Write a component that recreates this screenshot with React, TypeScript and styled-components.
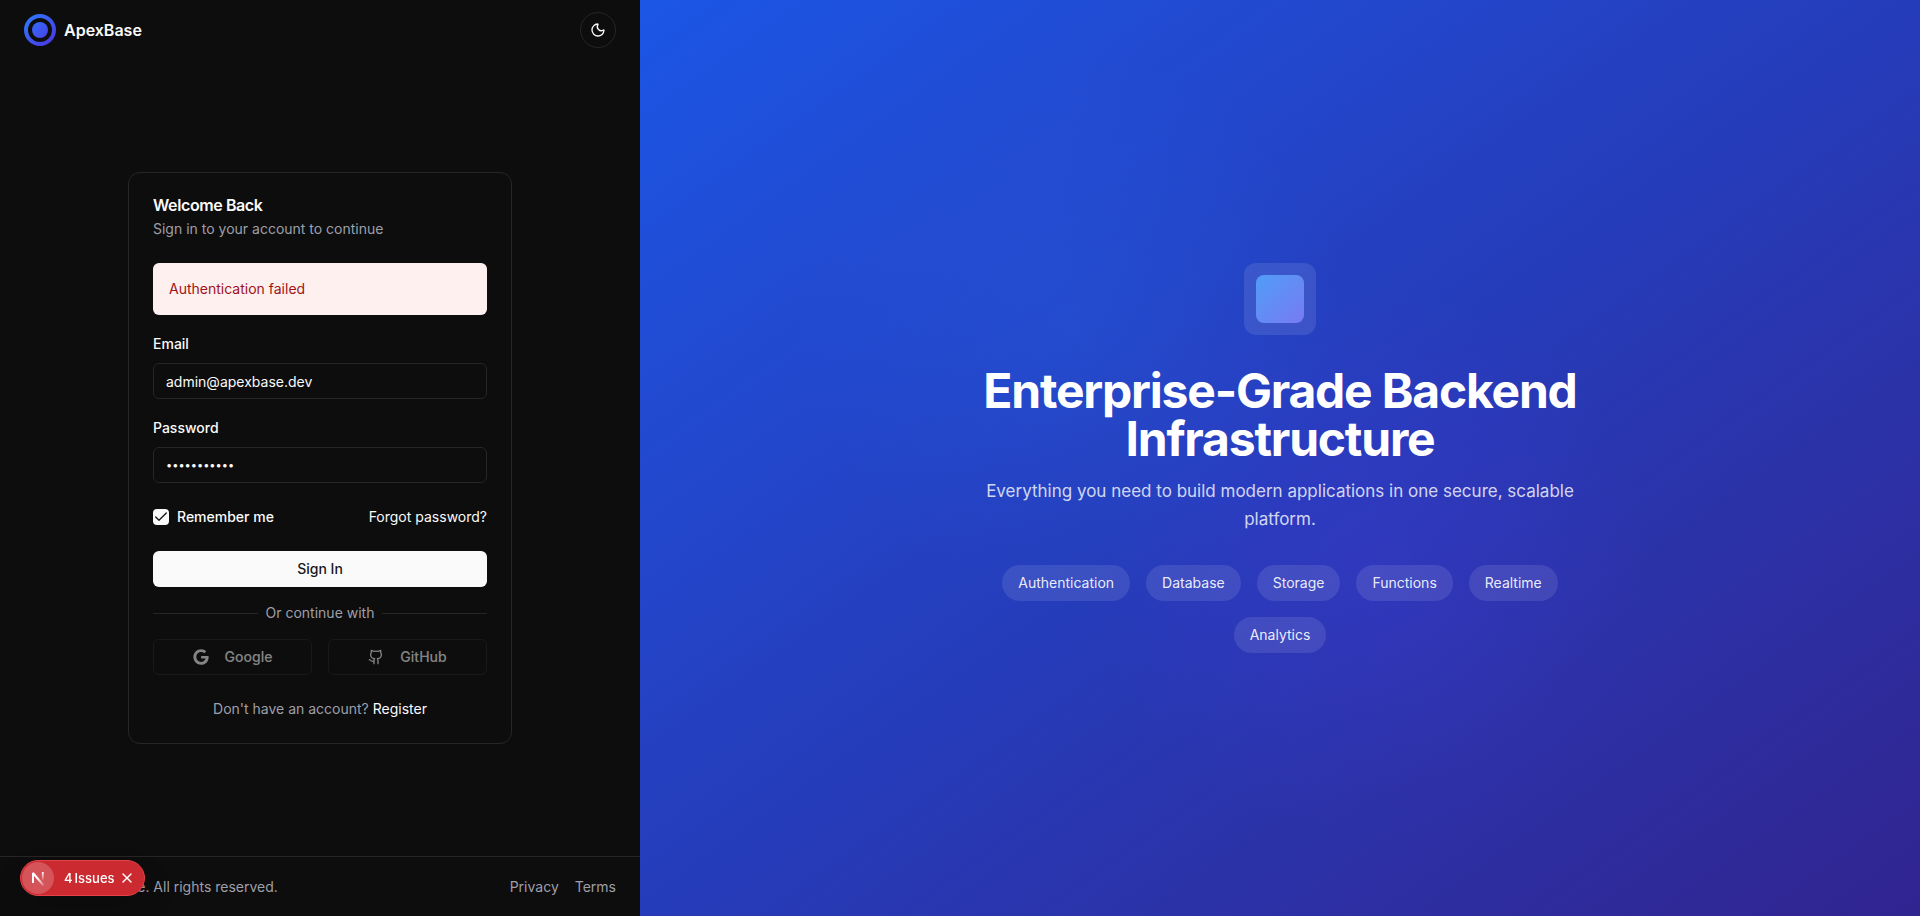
import React from "react";
import styled, { createGlobalStyle } from "styled-components";
import { Check, Github, Moon, X } from "lucide-react";

const Global = createGlobalStyle`
  *, *::before, *::after { box-sizing: border-box; }
  body {
    margin: 0;
    background: #0d0d0d;
    color: #fafafa;
    font-family: Inter, "Liberation Sans", sans-serif;
    font-size: 14px;
    line-height: 20px;
    -webkit-font-smoothing: antialiased;
  }
  a { color: inherit; text-decoration: none; }
  button, input { font: inherit; color: inherit; }
  h1, h2, p { margin: 0; }
`;

const Page = styled.div`
  display: grid;
  grid-template-columns: 1fr 2fr;
  min-height: 100vh;
`;

const Side = styled.div`
  display: flex;
  flex-direction: column;
`;

const Header = styled.header`
  display: flex;
  align-items: center;
  justify-content: space-between;
  height: 60px;
  padding: 0 24px;
`;

const Brand = styled.a`
  display: flex;
  align-items: center;
  gap: 8px;
  font-size: 16px;
  line-height: 24px;
  font-weight: 600;
`;

const ThemeToggle = styled.button`
  display: grid;
  place-items: center;
  width: 36px;
  height: 36px;
  padding: 0;
  border: 1px solid #262626;
  border-radius: 50%;
  background: transparent;
`;

const Main = styled.main`
  flex: 1;
  display: flex;
  align-items: center;
  justify-content: center;
  padding: 24px;
`;

const Card = styled.section`
  width: 100%;
  max-width: 384px;
  padding: 24px;
  border: 1px solid #262626;
  border-radius: 12px;
  display: flex;
  flex-direction: column;
  gap: 24px;
`;

const CardHeader = styled.div`
  display: flex;
  flex-direction: column;
  gap: 6px;
`;

const Title = styled.h1`
  font-size: 16px;
  line-height: 16px;
  font-weight: 600;
  letter-spacing: -0.025em;
`;

const Muted = styled.p`
  color: #9f9fa9;
`;

const Form = styled.form`
  display: flex;
  flex-direction: column;
  gap: 24px;
`;

const Fields = styled.div`
  display: flex;
  flex-direction: column;
  gap: 20px;
`;

const Alert = styled.div`
  padding: 16px;
  border-radius: 6px;
  background: #fef0ef;
  color: #9f1219;
`;

const Field = styled.div`
  display: flex;
  flex-direction: column;
  gap: 10px;
`;

const Label = styled.label`
  line-height: 18px;
  font-weight: 500;
`;

const TextInput = styled.input`
  width: 100%;
  height: 36px;
  padding: 0 12px;
  border: 1px solid #262626;
  border-radius: 6px;
  background: transparent;
  outline: none;
  &[type="password"] { font-size: 11px; }
`;

const Options = styled.div`
  display: flex;
  align-items: center;
  justify-content: space-between;
`;

const Remember = styled.label`
  display: flex;
  align-items: center;
  gap: 8px;
  font-weight: 500;
`;

const CheckBox = styled.span`
  display: grid;
  width: 16px;
  height: 16px;
  input, svg { grid-area: 1 / 1; margin: 0; }
  input {
    appearance: none;
    width: 16px;
    height: 16px;
    border-radius: 4px;
    background: #fafafa;
  }
  svg { place-self: center; color: #171717; pointer-events: none; }
`;

const SubmitButton = styled.button`
  height: 36px;
  border: 0;
  border-radius: 6px;
  background: #fafafa;
  color: #18181b;
  font-weight: 500;
`;

const Social = styled.div`
  display: flex;
  flex-direction: column;
  gap: 16px;
  margin-top: -8px;
`;

const Divider = styled.div`
  display: flex;
  align-items: center;
  gap: 8px;
  color: #9f9fa9;
  &::before, &::after {
    content: "";
    flex: 1;
    height: 1px;
    background: #262626;
  }
`;

const Providers = styled.div`
  display: grid;
  grid-template-columns: 1fr 1fr;
  gap: 16px;
`;

const ProviderButton = styled.button`
  display: flex;
  align-items: center;
  justify-content: center;
  gap: 16px;
  height: 36px;
  border: 1px solid #262626;
  border-radius: 6px;
  background: transparent;
  font-weight: 500;
  opacity: 0.5;
`;

const Register = styled.p`
  color: #9f9fa9;
  text-align: center;
  a { color: #fafafa; }
`;

const Footer = styled.footer`
  display: flex;
  align-items: center;
  justify-content: space-between;
  height: 60px;
  padding: 0 24px;
  border-top: 1px solid #262626;
  color: #9f9fa9;
`;

const FooterLinks = styled.nav`
  display: flex;
  gap: 16px;
`;

const Hero = styled.section`
  display: flex;
  align-items: center;
  justify-content: center;
  padding: 48px;
  background:
    radial-gradient(circle 280px at 34% 36%, rgba(43, 127, 255, 0.12), rgba(43, 127, 255, 0.06) 50%, rgba(43, 127, 255, 0)),
    radial-gradient(circle 280px at 57% 61%, rgba(97, 60, 255, 0.14), rgba(97, 60, 255, 0.08) 50%, rgba(97, 60, 255, 0)),
    linear-gradient(to bottom right in oklab, #1b56e5, #253cba 50%, #302490);
`;

const HeroContent = styled.div`
  display: flex;
  flex-direction: column;
  align-items: center;
  width: 100%;
  max-width: 600px;
  text-align: center;
`;

const Emblem = styled.div`
  display: grid;
  place-items: center;
  width: 72px;
  height: 72px;
  border-radius: 12px;
  background: rgba(255, 255, 255, 0.1);
  &::before {
    content: "";
    width: 48px;
    height: 48px;
    border-radius: 8px;
    background: linear-gradient(to bottom right, #509cf7, #787bf2);
  }
`;

const HeroTitle = styled.h2`
  margin-top: 32px;
  font-size: 48px;
  line-height: 48px;
  font-weight: 700;
  letter-spacing: -0.025em;
  color: #ffffff;
`;

const HeroText = styled.p`
  margin-top: 14px;
  font-size: 17px;
  line-height: 28px;
  color: rgba(255, 255, 255, 0.8);
`;

const Tags = styled.ul`
  display: flex;
  flex-wrap: wrap;
  justify-content: center;
  gap: 16px;
  margin: 32px 0 0;
  padding: 0;
  list-style: none;
`;

const Tag = styled.li`
  padding: 8px 16px;
  border-radius: 18px;
  background: rgba(255, 255, 255, 0.1);
  color: rgba(255, 255, 255, 0.9);
`;

const IssueBadge = styled.div`
  position: fixed;
  left: 20px;
  bottom: 20px;
  display: flex;
  align-items: center;
  height: 36px;
  padding: 0 9px 0 1px;
  border: 1px solid #e5414a;
  border-radius: 18px;
  background: #ca2a30;
  box-shadow: 0 16px 32px rgba(0, 0, 0, 0.14);
  color: #ffffff;
  font-size: 13px;
  line-height: 16px;
  font-weight: 500;
  button {
    display: flex;
    align-items: center;
    padding: 0;
    border: 0;
    background: transparent;
  }
`;

const LogoButton = styled.button`
  && {
    justify-content: center;
    width: 32px;
    height: 32px;
    border-radius: 50%;
    background: rgba(255, 255, 255, 0.2);
  }
`;

const IssueButton = styled.button`
  && {
    gap: 2px;
    margin: 0 4px 0 10px;
  }
`;

function BrandMark() {
  return (
    <svg width="32" height="32" viewBox="0 0 32 32" aria-hidden="true">
      <defs>
        <linearGradient id="mark" x1="0" y1="0" x2="32" y2="32" gradientUnits="userSpaceOnUse">
          <stop stopColor="#2b7fff" />
          <stop offset="1" stopColor="#4f2fe0" />
        </linearGradient>
      </defs>
      <circle cx="16" cy="16" r="14" fill="none" stroke="url(#mark)" strokeWidth="4" />
      <circle cx="16" cy="16" r="8" fill="url(#mark)" />
    </svg>
  );
}

function GoogleIcon() {
  return (
    <svg width="16" height="16" viewBox="0 0 488 512" fill="currentColor" aria-hidden="true">
      <path d="M488 261.8C488 403.3 391.1 504 248 504 110.8 504 0 393.2 0 256S110.8 8 248 8c66.8 0 123 24.5 166.3 64.9l-67.5 64.9C258.5 52.6 94.3 116.6 94.3 256c0 86.5 69.1 156.6 153.7 156.6 98.2 0 135-70.4 140.8-106.9H248v-85.3h236.1c2.3 12.7 3.9 24.9 3.9 41.4z" />
    </svg>
  );
}

function NextMark() {
  return (
    <svg width="16" height="16" viewBox="0 0 16 16" fill="none" aria-hidden="true">
      <defs>
        <linearGradient id="stem" x1="0" y1="2" x2="0" y2="11" gradientUnits="userSpaceOnUse">
          <stop stopColor="#fff" />
          <stop offset="1" stopColor="#fff" stopOpacity="0" />
        </linearGradient>
        <linearGradient id="slash" x1="8" y1="8" x2="14" y2="15" gradientUnits="userSpaceOnUse">
          <stop stopColor="#fff" />
          <stop offset="1" stopColor="#fff" stopOpacity="0.2" />
        </linearGradient>
      </defs>
      <path d="M3 13V3L13.5 15.5" stroke="url(#slash)" strokeWidth="2" strokeLinejoin="bevel" />
      <path d="M12.8 2V12" stroke="url(#stem)" strokeWidth="1.8" />
    </svg>
  );
}

const FEATURES = ["Authentication", "Database", "Storage", "Functions", "Realtime", "Analytics"];

export default function App() {
  return (
    <>
      <Global />
      <Page>
        <Side>
          <Header>
            <Brand href="#">
              <BrandMark />
              ApexBase
            </Brand>
            <ThemeToggle type="button" aria-label="Toggle theme">
              <Moon size={16} />
            </ThemeToggle>
          </Header>
          <Main>
            <Card>
              <CardHeader>
                <Title>Welcome Back</Title>
                <Muted>Sign in to your account to continue</Muted>
              </CardHeader>
              <Form onSubmit={(e: React.FormEvent) => e.preventDefault()}>
                <Fields>
                  <Alert role="alert">Authentication failed</Alert>
                  <Field>
                    <Label htmlFor="email">Email</Label>
                    <TextInput id="email" type="email" defaultValue="admin@apexbase.dev" />
                  </Field>
                  <Field>
                    <Label htmlFor="password">Password</Label>
                    <TextInput id="password" type="password" defaultValue="password123" />
                  </Field>
                </Fields>
                <Options>
                  <Remember>
                    <CheckBox>
                      <input type="checkbox" defaultChecked />
                      <Check size={16} strokeWidth={2} />
                    </CheckBox>
                    Remember me
                  </Remember>
                  <a href="#">Forgot password?</a>
                </Options>
                <SubmitButton type="submit">Sign In</SubmitButton>
                <Social>
                  <Divider>Or continue with</Divider>
                  <Providers>
                    <ProviderButton type="button" disabled>
                      <GoogleIcon />
                      Google
                    </ProviderButton>
                    <ProviderButton type="button" disabled>
                      <Github size={16} />
                      GitHub
                    </ProviderButton>
                  </Providers>
                </Social>
              </Form>
              <Register>
                Don't have an account? <a href="#">Register</a>
              </Register>
            </Card>
          </Main>
          <Footer>
            <span>© 2025 ApexBase. All rights reserved.</span>
            <FooterLinks>
              <a href="#">Privacy</a>
              <a href="#">Terms</a>
            </FooterLinks>
          </Footer>
        </Side>
        <Hero>
          <HeroContent>
            <Emblem />
            <HeroTitle>Enterprise-Grade Backend Infrastructure</HeroTitle>
            <HeroText>
              Everything you need to build modern applications in one secure, scalable platform.
            </HeroText>
            <Tags>
              {FEATURES.map((name) => (
                <Tag key={name}>{name}</Tag>
              ))}
            </Tags>
          </HeroContent>
        </Hero>
      </Page>
      <IssueBadge>
        <LogoButton type="button" aria-label="Open developer tools">
          <NextMark />
        </LogoButton>
        <IssueButton type="button">
          <span>4</span>
          <span>Issues</span>
        </IssueButton>
        <button type="button" aria-label="Dismiss issues">
          <X size={16} strokeWidth={2} />
        </button>
      </IssueBadge>
    </>
  );
}
